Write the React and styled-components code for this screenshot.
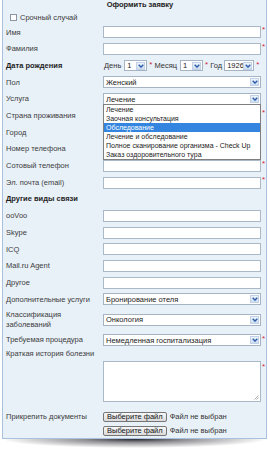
import React from "react";
import styled, { createGlobalStyle } from "styled-components";

const GlobalStyle = createGlobalStyle`
  body {
    margin: 0;
    background: #fff;
  }
`;

const Page = styled.div`
  width: 270px;
  height: 451px;
  padding: 0 3px 0 2px;
  box-sizing: border-box;
  font-family: "Liberation Sans", Arial, sans-serif;
  font-size: 7.5px;
  color: #3a3a3a;
  overflow: hidden;
`;

const Panel = styled.div`
  position: relative;
  background: #e8f0f8;
  border: 1px solid #a9c1dc;
  border-top: none;
  padding: 0 0 0 3px;
`;

const Shadow = styled.div`
  height: 9px;
  margin: 0 4px;
  background: radial-gradient(ellipse 52% 100% at 50% 0, rgba(15, 15, 25, 0.9) 0%, rgba(15, 15, 25, 0.45) 40%, rgba(15, 15, 25, 0) 100%);
`;

const Title = styled.div`
  height: 10px;
  line-height: 10px;
  text-align: center;
  font-weight: bold;
  color: #222;
  padding-left: 8px;
`;

const CheckRow = styled.div`
  height: 14px;
  display: flex;
  align-items: center;
  padding-left: 4px;
`;

const CheckBox = styled.span`
  width: 7px;
  height: 7px;
  box-sizing: border-box;
  border: 1px solid #8c96a2;
  background: #fff;
  margin-right: 3px;
`;

const Row = styled.div`
  display: grid;
  grid-template-columns: 97px 158px 5px;
  align-items: center;
  height: ${(p) => p.$h || 16.7}px;
`;

const Label = styled.div`
  font-weight: ${(p) => (p.$bold ? "bold" : "normal")};
  color: ${(p) => (p.$bold ? "#1e1e1e" : "#3c3c3c")};
  line-height: 9.5px;
`;

const Star = styled.span`
  color: #d3243a;
  font-size: 8px;
  line-height: 8px;
  align-self: ${(p) => (p.$top ? "start" : "center")};
  margin-top: ${(p) => (p.$top ? 2 : -3)}px;
  padding-left: 1px;
`;

const Input = styled.div`
  height: 12px;
  box-sizing: border-box;
  border: 1px solid #abb8c6;
  background: #fff;
`;

const Select = styled.div`
  position: relative;
  flex: none;
  height: ${(p) => (p.$small ? 11 : 12)}px;
  width: ${(p) => (p.$w ? `${p.$w}px` : "auto")};
  box-sizing: border-box;
  border: 1px solid #a6b3c2;
  background: #fff;
  display: flex;
  align-items: center;
  padding: 0 1px 0 2px;
  color: #222;
`;

const Value = styled.span`
  flex: 1;
  white-space: nowrap;
  overflow: hidden;
`;

const ArrowBox = styled.span`
  flex: none;
  width: 9px;
  height: 8px;
  box-sizing: border-box;
  border: 1px solid #c2d2e6;
  background: linear-gradient(#eef4fc, #cddcf0);
  display: flex;
  align-items: center;
  justify-content: center;
`;

const List = styled.div`
  position: absolute;
  top: 100%;
  left: -1px;
  width: 156px;
  background: #fff;
  border: 1px solid #7f7f7f;
  z-index: 2;
  font-size: 7px;
`;

const Option = styled.div`
  height: 9px;
  line-height: 9px;
  padding-left: 2px;
  white-space: nowrap;
  background: ${(p) => (p.$active ? "#3385df" : "transparent")};
  color: ${(p) => (p.$active ? "#fff" : "#222")};
`;

const DateFields = styled.div`
  display: flex;
  align-items: center;
  padding-left: 1px;
  color: #333;
  white-space: nowrap;
`;

const DateWord = styled.span`
  margin-right: ${(p) => p.$mr || 3}px;
`;

const InlineStar = styled.span`
  color: #d3243a;
  font-size: 8px;
  margin: -3px ${(p) => p.$mr ?? 2}px 0 2px;
`;

const TextArea = styled.div`
  position: relative;
  height: 41px;
  box-sizing: border-box;
  border: 1px solid #abb8c6;
  background: #fff;
`;

const Grip = styled.svg`
  position: absolute;
  right: 1px;
  bottom: 1px;
`;

const AreaRow = styled.div`
  display: grid;
  grid-template-columns: 97px 158px 5px;
  margin: 2px 0 7.4px;
`;

const FileRow = styled.div`
  display: grid;
  grid-template-columns: 97px 163px;
  align-items: center;
  height: 14px;
`;

const FileField = styled.div`
  display: flex;
  align-items: center;
  color: #333;
`;

const FileButton = styled.span`
  height: 10px;
  line-height: 8px;
  box-sizing: border-box;
  border: 1px solid #767676;
  border-radius: 2px;
  background: linear-gradient(#f8f8f8, #dadada);
  padding: 0 3px;
  color: #111;
  margin-right: 3px;
  white-space: nowrap;
`;

const Chevron = () => (
  <svg width="6" height="4" viewBox="0 0 6 4">
    <path d="M0.7 0.8 L3 3.1 L5.3 0.8" fill="none" stroke="#2f5fa8" strokeWidth="1.4" />
  </svg>
);

const Dropdown = ({ value, w, small, children }) => (
  <Select $w={w} $small={small}>
    <Value>{value}</Value>
    <ArrowBox>
      <Chevron />
    </ArrowBox>
    {children}
  </Select>
);

const services = [
  "Лечение",
  "Заочная консультация",
  "Обследование",
  "Лечение и обследование",
  "Полное сканирование организма - Check Up",
  "Заказ оздоровительного тура",
];

const TextRow = ({ label, star }) => (
  <Row>
    <Label>{label}</Label>
    <Input />
    {star ? <Star $top>*</Star> : <span />}
  </Row>
);

export default function App() {
  return (
    <Page>
      <GlobalStyle />
      <Panel>
        <Title>Оформить заявку</Title>
        <CheckRow>
          <CheckBox />
          Срочный случай
        </CheckRow>
        <TextRow label="Имя" star />
        <TextRow label="Фамилия" star />
        <Row>
          <Label $bold>Дата рождения</Label>
          <DateFields>
            <DateWord>День</DateWord>
            <Dropdown value="1" w={23} small />
            <InlineStar>*</InlineStar>
            <DateWord>Месяц</DateWord>
            <Dropdown value="1" w={23} small />
            <InlineStar>*</InlineStar>
            <DateWord $mr={2}>Год</DateWord>
            <Dropdown value="1926" w={30} small />
            <InlineStar $mr={0}>*</InlineStar>
          </DateFields>
          <span />
        </Row>
        <Row>
          <Label>Пол</Label>
          <Dropdown value="Женский" />
          <span />
        </Row>
        <Row>
          <Label>Услуга</Label>
          <Dropdown value="Лечение">
            <List>
              {services.map((s) => (
                <Option key={s} $active={s === "Обследование"}>
                  {s}
                </Option>
              ))}
            </List>
          </Dropdown>
          <span />
        </Row>
        <TextRow label="Страна проживания" star />
        <TextRow label="Город" />
        <TextRow label="Номер телефона" />
        <TextRow label="Сотовый телефон" star />
        <TextRow label="Эл. почта (email)" star />
        <Row>
          <Label $bold>Другие виды связи</Label>
        </Row>
        <TextRow label="ooVoo" />
        <TextRow label="Skype" />
        <TextRow label="ICQ" />
        <TextRow label="Mail.ru Agent" />
        <TextRow label="Другое" />
        <Row>
          <Label>Дополнительные услуги</Label>
          <Dropdown value="Бронирование отеля" />
          <span />
        </Row>
        <Row $h={24}>
          <Label>
            Классификация
            <br />
            заболеваний
          </Label>
          <Dropdown value="Онкология" />
          <span />
        </Row>
        <Row>
          <Label>Требуемая процедура</Label>
          <Dropdown value="Немедленная госпитализация" />
          <Star>*</Star>
        </Row>
        <Row $h={11}>
          <Label>Краткая история болезни</Label>
        </Row>
        <AreaRow>
          <span />
          <TextArea>
            <Grip width="5" height="5" viewBox="0 0 5 5">
              <path d="M4.5 0.5 L0.5 4.5 M4.5 2.5 L2.5 4.5" stroke="#9a9a9a" strokeWidth="0.8" />
            </Grip>
          </TextArea>
          <Star $top>*</Star>
        </AreaRow>
        <FileRow>
          <Label>Прикрепить документы</Label>
          <FileField>
            <FileButton>Выберите файл</FileButton>
            Файл не выбран
          </FileField>
        </FileRow>
        <FileRow>
          <span />
          <FileField>
            <FileButton>Выберите файл</FileButton>
            Файл не выбран
          </FileField>
        </FileRow>
      </Panel>
      <Shadow />
    </Page>
  );
}
